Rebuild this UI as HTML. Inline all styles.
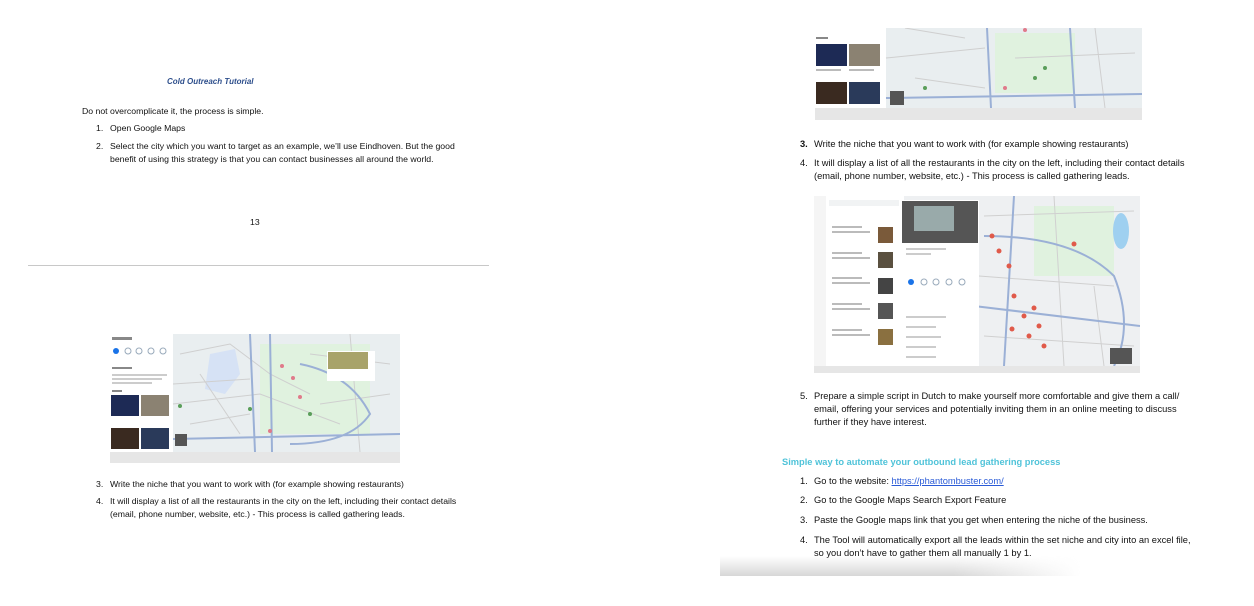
<!DOCTYPE html>
<html><head><meta charset="utf-8"><style>
*{margin:0;padding:0;box-sizing:border-box}
body{width:1254px;height:606px;background:#fff;position:relative;overflow:hidden;font-family:"Liberation Sans",sans-serif;color:#111;font-size:8.7px}
.t{position:absolute;white-space:nowrap;line-height:12.5px}
.r{font-size:9.3px;line-height:13px}
.map{position:absolute;overflow:hidden}
</style></head><body>

<div class="t" style="left:167px;top:76px;font-style:italic;font-weight:bold;color:#2e4f8c;font-size:8px">Cold Outreach Tutorial</div>
<div class="t" style="left:82px;top:105px">Do not overcomplicate it, the process is simple.</div>
<div class="t" style="left:96px;top:122px">1.</div><div class="t" style="left:110px;top:122px">Open Google Maps</div>
<div class="t" style="left:96px;top:140px">2.</div><div class="t" style="left:110px;top:140px">Select the city which you want to target as an example, we’ll use Eindhoven. But the good<br>benefit of using this strategy is that you can contact businesses all around the world.</div>
<div class="t" style="left:250px;top:216px">13</div>
<div style="position:absolute;left:28px;top:265px;width:461px;height:1px;background:#c8c8c8"></div>

<!-- map 1 -->
<div class="map" style="left:110px;top:334px;width:290px;height:129px;background:#e6e6e6">
<svg width="290" height="118" style="position:absolute;left:0;top:0">
<rect width="290" height="118" fill="#fff"/>
<rect x="63" width="227" height="118" fill="#e9eef0"/>
<rect x="150" y="10" width="110" height="90" fill="#e0f2df"/>
<path d="M100 20 L125 15 L130 40 L115 60 L95 55 Z" fill="#d6e2f5"/>
<g stroke="#cfcfcf" stroke-width="1" fill="none"><path d="M70 20 L120 10 L160 40 L200 60 M63 70 L150 60 L230 90 M80 90 L140 80 M200 20 L280 30 M210 70 L280 60 M90 40 L130 100 M240 0 L250 118 M63 50 L140 45"/></g>
<path d="M140 0 L145 118 M160 0 L162 118 M63 105 L290 100 M190 30 Q240 40 260 80 Q240 110 180 110" stroke="#9bb0d6" stroke-width="2" fill="none"/>
<rect x="217" y="17" width="48" height="30" fill="#fff"/><rect x="218" y="18" width="40" height="17" fill="#a8a36a"/>
<g fill="#e07a8a"><circle cx="172" cy="32" r="2"/><circle cx="183" cy="44" r="2"/><circle cx="190" cy="63" r="2"/><circle cx="160" cy="97" r="2"/></g>
<g fill="#5a9e5a"><circle cx="140" cy="75" r="2"/><circle cx="200" cy="80" r="2"/><circle cx="70" cy="72" r="2"/></g>
<rect x="65" y="100" width="12" height="12" fill="#555"/>
<rect x="2" y="3" width="20" height="3" fill="#888"/>
<circle cx="6" cy="17" r="3" fill="#1a73e8"/><circle cx="18" cy="17" r="3" fill="none" stroke="#9ab"/><circle cx="29" cy="17" r="3" fill="none" stroke="#9ab"/><circle cx="41" cy="17" r="3" fill="none" stroke="#9ab"/><circle cx="53" cy="17" r="3" fill="none" stroke="#9ab"/>
<rect x="2" y="33" width="20" height="2" fill="#888"/>
<rect x="2" y="40" width="55" height="2" fill="#ccc"/><rect x="2" y="44" width="50" height="2" fill="#ccc"/><rect x="2" y="48" width="40" height="2" fill="#ccc"/>
<rect x="2" y="56" width="10" height="2" fill="#888"/>
<rect x="1" y="61" width="28" height="21" fill="#1d2a55"/><rect x="31" y="61" width="28" height="21" fill="#8b8272"/>
<rect x="1" y="94" width="28" height="21" fill="#3a2a20"/><rect x="31" y="94" width="28" height="21" fill="#2a3a5a"/>
</svg></div>

<div class="t" style="left:96px;top:478px">3.</div><div class="t" style="left:110px;top:478px">Write the niche that you want to work with (for example showing restaurants)</div>
<div class="t" style="left:96px;top:495px">4.</div><div class="t" style="left:110px;top:495px">It will display a list of all the restaurants in the city on the left, including their contact details<br>(email, phone number, website, etc.) - This process is called gathering leads.</div>

<!-- right page -->
<div class="map" style="left:815px;top:28px;width:327px;height:92px;background:#e6e6e6">
<svg width="327" height="80" style="position:absolute;left:0;top:0">
<rect width="327" height="80" fill="#fff"/>
<rect x="71" width="256" height="80" fill="#e9eef0"/>
<rect x="180" y="5" width="80" height="60" fill="#e0f2df"/>
<path d="M90 0 L150 10 M71 30 L170 20 M200 30 L320 25 M100 50 L170 60 M280 0 L290 80" stroke="#cfcfcf" fill="none"/>
<path d="M172 0 L176 80 M71 70 L327 66 M255 0 L260 80" stroke="#9bb0d6" stroke-width="2" fill="none"/>
<g fill="#5a9e5a"><circle cx="220" cy="50" r="2"/><circle cx="230" cy="40" r="2"/><circle cx="110" cy="60" r="2"/></g>
<g fill="#e07a8a"><circle cx="190" cy="60" r="2"/><circle cx="210" cy="2" r="2"/></g>
<rect x="75" y="63" width="14" height="14" fill="#555"/>
<rect x="1" y="9" width="12" height="2" fill="#888"/>
<rect x="1" y="16" width="31" height="22" fill="#1d2a55"/><rect x="34" y="16" width="31" height="22" fill="#8b8272"/>
<rect x="1" y="41" width="25" height="2" fill="#bbb"/><rect x="34" y="41" width="25" height="2" fill="#bbb"/>
<rect x="1" y="54" width="31" height="22" fill="#3a2a20"/><rect x="34" y="54" width="31" height="22" fill="#2a3a5a"/>
</svg></div>

<div class="t r" style="left:800px;top:138px;font-weight:bold">3.</div><div class="t r" style="left:814px;top:138px">Write the niche that you want to work with (for example showing restaurants)</div>
<div class="t r" style="left:800px;top:157px">4.</div><div class="t r" style="left:814px;top:157px">It will display a list of all the restaurants in the city on the left, including their contact details<br>(email, phone number, website, etc.) - This process is called gathering leads.</div>

<div class="map" style="left:814px;top:196px;width:326px;height:177px;background:#e6e6e6">
<svg width="326" height="170" style="position:absolute;left:0;top:0">
<rect width="326" height="170" fill="#fff"/>
<rect x="90" width="236" height="170" fill="#eef0f2"/>
<rect x="220" y="10" width="80" height="70" fill="#e0f2df"/>
<ellipse cx="307" cy="35" rx="8" ry="18" fill="#9fd0f0"/>
<path d="M170 20 L320 15 M165 80 L300 90 M170 140 L320 150 M240 0 L250 170 M280 90 L290 170" stroke="#d0d0d0" fill="none"/>
<path d="M170 40 Q260 40 300 80 Q320 130 300 170 M160 110 L326 130 M200 0 L190 170" stroke="#9bb0d6" stroke-width="2" fill="none"/>
<rect x="0" y="0" width="12" height="170" fill="#f5f5f5"/>
<rect x="15" y="4" width="70" height="6" fill="#f1f3f4"/>
<rect x="87" y="4" width="78" height="166" fill="#fff"/>
<rect x="88" y="5" width="76" height="42" fill="#555"/><rect x="100" y="10" width="40" height="25" fill="#9aa"/>
<circle cx="97" cy="86" r="3" fill="#1a73e8"/><circle cx="110" cy="86" r="3" fill="none" stroke="#9ab"/><circle cx="122" cy="86" r="3" fill="none" stroke="#9ab"/><circle cx="135" cy="86" r="3" fill="none" stroke="#9ab"/><circle cx="148" cy="86" r="3" fill="none" stroke="#9ab"/>
<g fill="#ccc"><rect x="92" y="52" width="40" height="2"/><rect x="92" y="57" width="25" height="2"/><rect x="92" y="120" width="40" height="2"/><rect x="92" y="130" width="30" height="2"/><rect x="92" y="140" width="35" height="2"/><rect x="92" y="150" width="30" height="2"/><rect x="92" y="160" width="30" height="2"/></g>
<g fill="#bbb"><rect x="18" y="30" width="30" height="2"/><rect x="18" y="35" width="38" height="2"/><rect x="18" y="56" width="30" height="2"/><rect x="18" y="61" width="38" height="2"/><rect x="18" y="81" width="30" height="2"/><rect x="18" y="86" width="38" height="2"/><rect x="18" y="107" width="30" height="2"/><rect x="18" y="112" width="38" height="2"/><rect x="18" y="133" width="30" height="2"/><rect x="18" y="138" width="38" height="2"/></g>
<rect x="64" y="31" width="15" height="16" fill="#7a5a3a"/><rect x="64" y="56" width="15" height="16" fill="#5a5040"/><rect x="64" y="82" width="15" height="16" fill="#444"/><rect x="64" y="107" width="15" height="16" fill="#555"/><rect x="64" y="133" width="15" height="16" fill="#8a7040"/>
<g fill="#e05a4a"><circle cx="178" cy="40" r="2.5"/><circle cx="185" cy="55" r="2.5"/><circle cx="195" cy="70" r="2.5"/><circle cx="200" cy="100" r="2.5"/><circle cx="210" cy="120" r="2.5"/><circle cx="220" cy="112" r="2.5"/><circle cx="225" cy="130" r="2.5"/><circle cx="230" cy="150" r="2.5"/><circle cx="215" cy="140" r="2.5"/><circle cx="260" cy="48" r="2.5"/><circle cx="198" cy="133" r="2.5"/></g>
<rect x="296" y="152" width="22" height="16" fill="#555"/>
</svg></div>

<div class="t r" style="left:800px;top:390px">5.</div><div class="t r" style="left:814px;top:390px">Prepare a simple script in Dutch to make yourself more comfortable and give them a call/<br>email, offering your services and potentially inviting them in an online meeting to discuss<br>further if they have interest.</div>

<div class="t r" style="left:782px;top:456px;font-weight:bold;color:#4fc3d9">Simple way to automate your outbound lead gathering process</div>
<div class="t r" style="left:800px;top:475px">1.</div><div class="t r" style="left:814px;top:475px">Go to the website: <span style="color:#2a5bd7;text-decoration:underline">https://phantombuster.com/</span></div>
<div class="t r" style="left:800px;top:494px">2.</div><div class="t r" style="left:814px;top:494px">Go to the Google Maps Search Export Feature</div>
<div class="t r" style="left:800px;top:514px">3.</div><div class="t r" style="left:814px;top:514px">Paste the Google maps link that you get when entering the niche of the business.</div>
<div class="t r" style="left:800px;top:534px">4.</div><div class="t r" style="left:814px;top:534px">The Tool will automatically export all the leads within the set niche and city into an excel file,<br>so you don’t have to gather them all manually 1 by 1.</div>
<div style="position:absolute;left:720px;top:556px;width:360px;height:20px;background:linear-gradient(to bottom,rgba(255,255,255,0),rgba(215,215,215,1));-webkit-mask-image:linear-gradient(to right,#000 65%,transparent);mask-image:linear-gradient(to right,#000 65%,transparent)"></div>
</body></html>
